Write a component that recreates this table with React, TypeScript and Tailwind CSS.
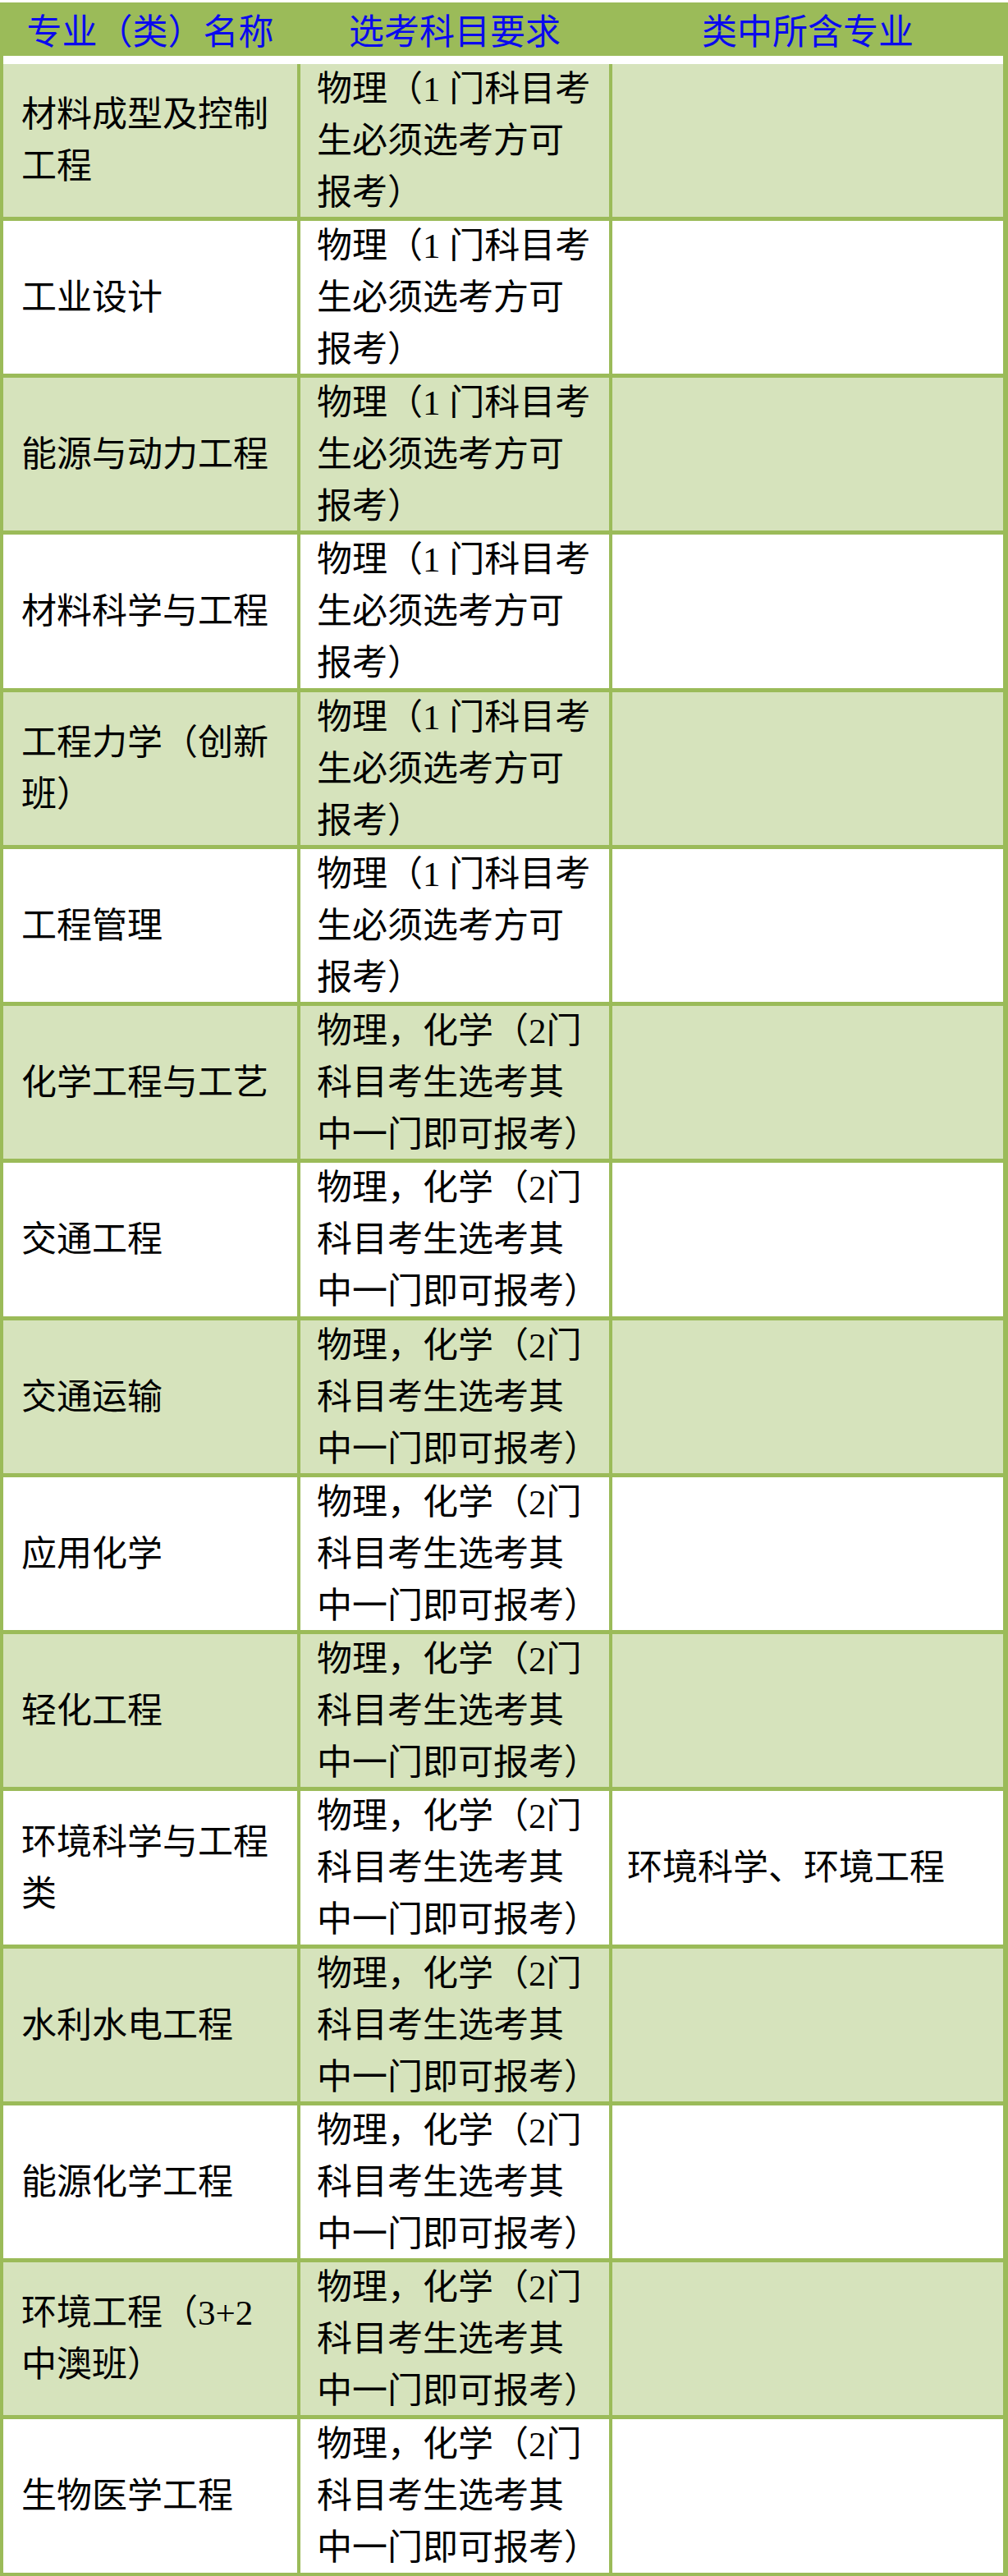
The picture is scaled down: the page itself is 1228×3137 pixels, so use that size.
import React from "react";

type Row = { name: string[]; req: string[]; sub: string };

const req1 = ["物理（1 门科目考", "生必须选考方可", "报考）"];
const req2 = ["物理，化学（2门", "科目考生选考其", "中一门即可报考）"];

const rows: Row[] = [
  { name: ["材料成型及控制", "工程"], req: req1, sub: "" },
  { name: ["工业设计"], req: req1, sub: "" },
  { name: ["能源与动力工程"], req: req1, sub: "" },
  { name: ["材料科学与工程"], req: req1, sub: "" },
  { name: ["工程力学（创新", "班）"], req: req1, sub: "" },
  { name: ["工程管理"], req: req1, sub: "" },
  { name: ["化学工程与工艺"], req: req2, sub: "" },
  { name: ["交通工程"], req: req2, sub: "" },
  { name: ["交通运输"], req: req2, sub: "" },
  { name: ["应用化学"], req: req2, sub: "" },
  { name: ["轻化工程"], req: req2, sub: "" },
  { name: ["环境科学与工程", "类"], req: req2, sub: "环境科学、环境工程" },
  { name: ["水利水电工程"], req: req2, sub: "" },
  { name: ["能源化学工程"], req: req2, sub: "" },
  { name: ["环境工程（3+2", "中澳班）"], req: req2, sub: "" },
  { name: ["生物医学工程"], req: req2, sub: "" },
];

const font = {
  fontFamily: '"Liberation Serif", "Noto Sans CJK SC", serif',
};

function Lines({ lines }: { lines: string[] }) {
  return (
    <div>
      {lines.map((l, i) => (
        <div key={i} className="whitespace-pre">
          {l}
        </div>
      ))}
    </div>
  );
}

export default function App() {
  return (
    <div className="w-[1228px] bg-white pt-[3px]" style={font}>
      <div className="bg-[#9bbb59] pl-[4px] pr-[6px] pb-[5px]">
        <div className="grid h-[65px] grid-cols-[358px_376px_476px] gap-x-[4px] text-[43px] leading-[65px] text-[#0a0aee]">
          <div className="flex items-center justify-center pt-[4px]">专业（类）名称</div>
          <div className="flex items-center justify-center pt-[4px]">选考科目要求</div>
          <div className="flex items-center justify-center pt-[4px]">类中所含专业</div>
        </div>
        <div className="h-[10px] bg-white" />
        <div className="grid grid-cols-[358px_376px_476px] gap-x-[4px] gap-y-[5px] text-[43px] leading-[63px] text-black">
          {rows.map((r, i) => {
            const bg = i % 2 === 0 ? "bg-[#d6e3bc]" : "bg-white";
            const h = i % 4 === 3 ? "h-[187px]" : "h-[186px]";
            return (
              <React.Fragment key={i}>
                <div className={`${bg} ${h} flex items-center pl-[22px]`}>
                  <Lines lines={r.name} />
                </div>
                <div className={`${bg} ${h} flex items-center pl-[20px]`}>
                  <Lines lines={r.req} />
                </div>
                <div className={`${bg} ${h} flex items-center pl-[18px]`}>
                  {r.sub ? <Lines lines={[r.sub]} /> : null}
                </div>
              </React.Fragment>
            );
          })}
        </div>
      </div>
    </div>
  );
}
